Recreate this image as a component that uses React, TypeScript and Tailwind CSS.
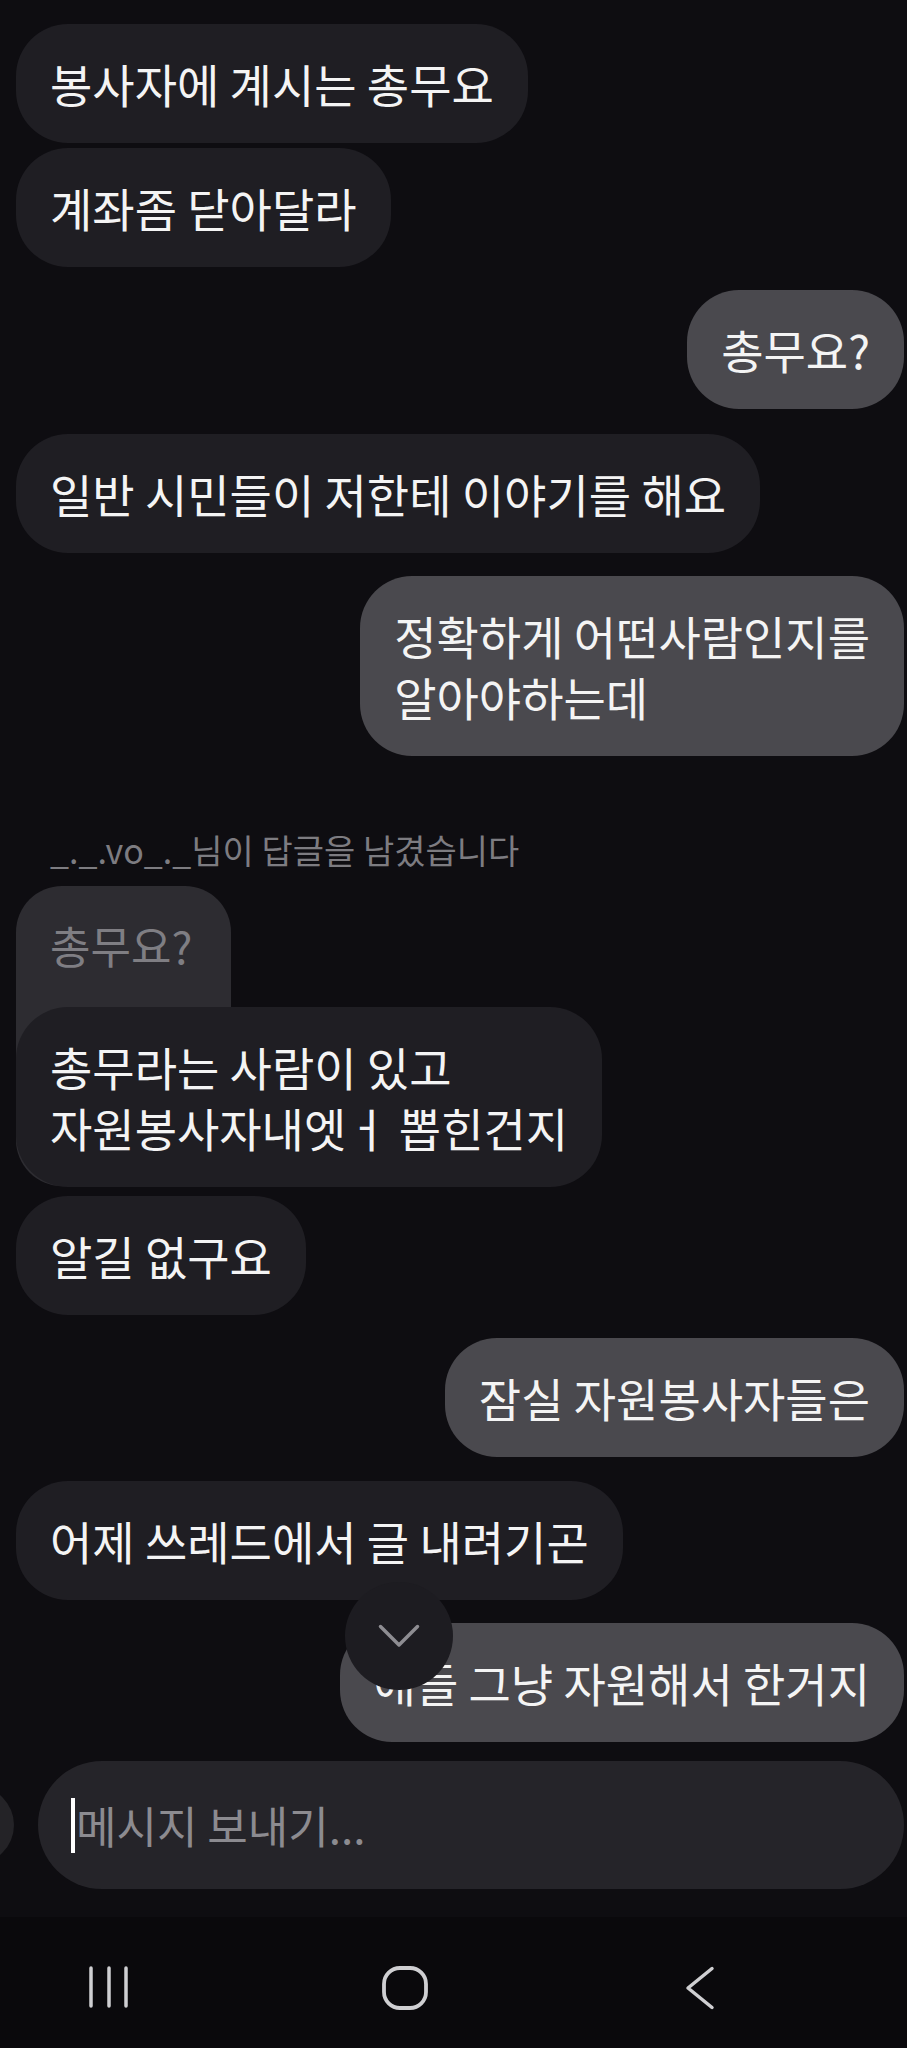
import React from "react";

const FONT = "font-['Noto_Sans_CJK_KR','Noto_Sans',sans-serif]";

function Recv({
  children,
  extra = "",
}: {
  children: React.ReactNode;
  extra?: string;
}) {
  return (
    <div
      className={`self-start ml-4 rounded-[52px] bg-[#1f1e23] px-[34px] py-[29px] text-[46px] leading-[61px] text-[#f4f4f4] whitespace-nowrap ${extra}`}
    >
      {children}
    </div>
  );
}

function Sent({
  children,
  extra = "",
}: {
  children: React.ReactNode;
  extra?: string;
}) {
  return (
    <div
      className={`self-end mr-[3px] rounded-[52px] bg-[#4a494e] px-[34px] py-[29px] text-[46px] leading-[61px] text-[#f4f4f4] whitespace-nowrap ${extra}`}
    >
      {children}
    </div>
  );
}

export default function App() {
  return (
    <div
      className={`relative flex h-[2048px] w-full flex-col overflow-hidden bg-[#0e0d11] pt-[24px] ${FONT}`}
    >
      <Recv>봉사자에 계시는 총무요</Recv>
      <Recv extra="mt-[5px]">계좌좀 닫아달라</Recv>
      <Sent extra="mt-[23px]">총무요?</Sent>
      <Recv extra="mt-[25px]">일반 시민들이 저한테 이야기를 해요</Recv>
      <Sent extra="mt-[23px]">
        <div>정확하게 어떤사람인지를</div>
        <div>알아야하는데</div>
      </Sent>

      <div className="mt-[74px] ml-[50px] text-[34px] leading-[40px] text-[#7d7c81] whitespace-nowrap">
        _._.vo_._님이 답글을 남겼습니다
      </div>

      <div className="mt-[16px] ml-4 flex flex-col items-start">
        <div className="h-[300px] w-[215px] rounded-[46px] bg-[#2d2c31] px-[34px] pt-[29px] text-[44px] leading-[61px] text-[#7f7e83]">
          총무요?
        </div>
        <div className="relative -mt-[179px] rounded-[52px] bg-[#1f1e23] px-[34px] py-[29px] text-[46px] leading-[61px] text-[#f4f4f4] whitespace-nowrap">
          <div>총무라는 사람이 있고</div>
          <div>자원봉사자내엣ㅓ 뽑힌건지</div>
        </div>
      </div>

      <Recv extra="mt-[9px]">알길 없구요</Recv>
      <Sent extra="mt-[23px]">잠실 자원봉사자들은</Sent>
      <Recv extra="mt-[24px]">어제 쓰레드에서 글 내려기곤</Recv>
      <Sent extra="mt-[23px]">애들 그냥 자원해서 한거지</Sent>

      {/* scroll to bottom button */}
      <div className="absolute left-[345px] top-[1582px] z-10 flex h-[108px] w-[108px] items-center justify-center rounded-full bg-[#1d1c21]">
        <svg width="42" height="24" viewBox="0 0 42 24" fill="none">
          <polyline
            points="2.5,2.5 21,21 39.5,2.5"
            stroke="#8e8d92"
            strokeWidth="3.5"
            strokeLinecap="round"
            strokeLinejoin="round"
          />
        </svg>
      </div>

      {/* input row */}
      <div className="mt-[19px] flex items-center">
        <div className="-ml-[64px] h-[78px] w-[78px] shrink-0 rounded-full bg-[#242327]" />
        <div className="ml-[24px] mr-[3px] flex h-[128px] flex-1 items-center rounded-full bg-[#252429] pl-[33px]">
          <div className="h-[55px] w-[4px] bg-white" />
          <span className="ml-[1px] text-[44px] leading-[50px] text-[#8c8b90]">
            메시지 보내기...
          </span>
        </div>
      </div>

      {/* nav bar */}
      <div className="mt-[28px] flex h-[131px] items-start bg-[#0a090c] pt-[49px] pl-[88px]">
        <svg width="40" height="42" viewBox="0 0 40 42" fill="none">
          <line x1="3" y1="2" x2="3" y2="40" stroke="#cfcfd2" strokeWidth="3.5" strokeLinecap="round" />
          <line x1="21" y1="2" x2="21" y2="40" stroke="#cfcfd2" strokeWidth="3.5" strokeLinecap="round" />
          <line x1="38" y1="2" x2="38" y2="40" stroke="#cfcfd2" strokeWidth="3.5" strokeLinecap="round" />
        </svg>
        <svg className="ml-[254px]" width="46" height="44" viewBox="0 0 46 44" fill="none">
          <rect x="2" y="2" width="42" height="40" rx="16" stroke="#cfcfd2" strokeWidth="3.8" />
        </svg>
        <svg className="ml-[257px]" width="30" height="44" viewBox="0 0 30 44" fill="none">
          <polyline
            points="27,2.5 3,22 27,41.5"
            stroke="#cfcfd2"
            strokeWidth="3.5"
            strokeLinecap="round"
            strokeLinejoin="round"
          />
        </svg>
      </div>
    </div>
  );
}
